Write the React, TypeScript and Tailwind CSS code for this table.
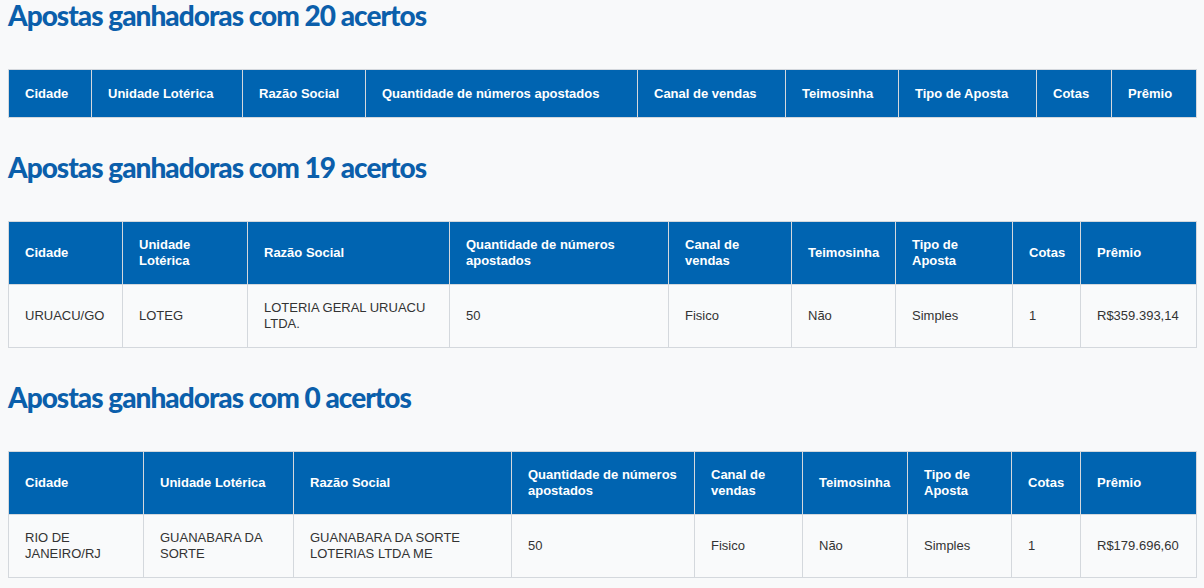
const headers = [
  "Cidade",
  "Unidade Lotérica",
  "Razão Social",
  "Quantidade de números apostados",
  "Canal de vendas",
  "Teimosinha",
  "Tipo de Aposta",
  "Cotas",
  "Prêmio",
];

type Section = {
  title: string;
  cols: number[];
  rows: string[][];
};

const sections: Section[] = [
  {
    title: "Apostas ganhadoras com 20 acertos",
    cols: [83, 151, 123, 272, 148, 113, 138, 75, 85],
    rows: [],
  },
  {
    title: "Apostas ganhadoras com 19 acertos",
    cols: [114, 125, 202, 219, 123, 104, 117, 68, 116],
    rows: [
      ["URUACU/GO", "LOTEG", "LOTERIA GERAL URUACU LTDA.", "50", "Fisico", "Não", "Simples", "1", "R$359.393,14"],
    ],
  },
  {
    title: "Apostas ganhadoras com 0 acertos",
    cols: [135, 150, 218, 183, 108, 105, 104, 69, 116],
    rows: [
      ["RIO DE JANEIRO/RJ", "GUANABARA DA SORTE", "GUANABARA DA SORTE LOTERIAS LTDA ME", "50", "Fisico", "Não", "Simples", "1", "R$179.696,60"],
    ],
  },
];

function WinnersTable({ s }: { s: Section }) {
  return (
    <table className="w-[1188px] table-fixed border-collapse text-[13px] leading-4 font-['Liberation_Sans',Arial,sans-serif]">
      <colgroup>
        {s.cols.map((w, i) => (
          <col key={i} style={{ width: w }} />
        ))}
      </colgroup>
      <thead>
        <tr className="bg-[#0064b1]">
          {headers.map((h) => (
            <th
              key={h}
              className="h-[48px] border border-[#d4d8dd] px-4 py-[15px] text-left font-bold text-white align-middle"
            >
              {h}
            </th>
          ))}
        </tr>
      </thead>
      <tbody>
        {s.rows.map((r, i) => (
          <tr key={i} className="bg-[#f9fafb]">
            {r.map((c, j) => (
              <td
                key={j}
                className="border border-[#d4d8dd] px-4 py-[15px] text-[#333333] align-middle"
              >
                {c}
              </td>
            ))}
          </tr>
        ))}
      </tbody>
    </table>
  );
}

export default function App() {
  return (
    <div className="min-h-[588px] bg-[#f8f9fa] px-2">
      {sections.map((s, i) => (
        <section key={s.title} className={i === 0 ? "" : "mt-[34px]"}>
          <h2 className="mb-[39px] text-[28px] leading-[30px] font-black tracking-[-0.035em] text-[#0b5fab] font-['Lato',sans-serif]">
            {s.title}
          </h2>
          <WinnersTable s={s} />
        </section>
      ))}
    </div>
  );
}
